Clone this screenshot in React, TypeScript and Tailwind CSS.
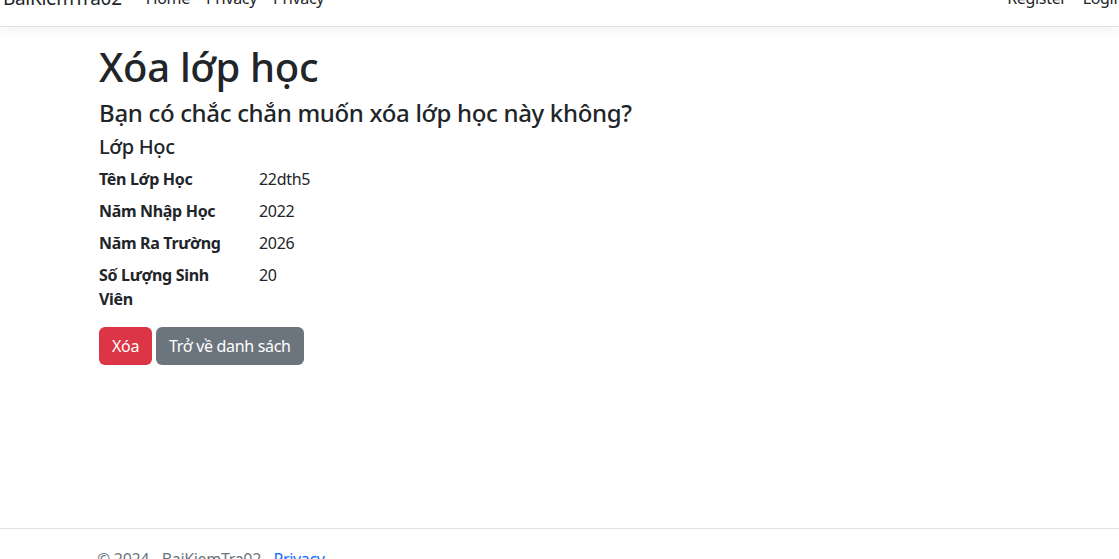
const rows = [
  { label: "Tên Lớp Học", value: "22dth5" },
  { label: "Năm Nhập Học", value: "2022" },
  { label: "Năm Ra Trường", value: "2026" },
  { label: "Số Lượng Sinh Viên", value: "20" },
];

export default function App() {
  return (
    <div
      className="flex h-[559px] flex-col overflow-hidden bg-white tracking-[-0.02em] text-[#212529]"
      style={{ fontFamily: '"Noto Sans", "Open Sans", sans-serif' }}
    >
      <header className="-mt-[30px] shrink-0">
        <nav className="flex h-[57px] items-center justify-between border-b border-[#dee2e6] bg-white py-2 shadow-[0_4px_12px_rgba(0,0,0,0.05)]">
          <div className="flex items-center">
            <a className="ml-[3px] mr-4 text-[19px] leading-[30px]">BaiKiemTra02</a>
            <ul className="flex text-[16px] leading-6">
              <li className="px-2 py-2">Home</li>
              <li className="px-2 py-2">Privacy</li>
              <li className="px-2 py-2">Privacy</li>
            </ul>
          </div>
          <ul className="-mr-[12px] flex text-[16px] leading-6">
            <li className="px-2 py-2">Register</li>
            <li className="px-2 py-2">Login</li>
          </ul>
        </nav>
      </header>

      <main className="ml-[87px] mt-4 w-[960px] shrink-0 px-3">
        <h1 className="mb-2 text-[40px] font-medium leading-[48px]">Xóa lớp học</h1>
        <h4 className="mb-2 text-[24px] font-medium leading-[28px]">
          Bạn có chắc chắn muốn xóa lớp học này không?
        </h4>
        <h5 className="mb-2 text-[20px] font-medium leading-6">Lớp Học</h5>
        <dl className="mb-4 text-[16px] leading-6">
          {rows.map((r) => (
            <div key={r.label} className="flex">
              <dt className="w-[160px] shrink-0 pr-6 font-bold">{r.label}</dt>
              <dd className="mb-2">{r.value}</dd>
            </div>
          ))}
        </dl>
        <form className="flex gap-1">
          <button
            type="button"
            className="h-[38px] rounded-md bg-[#dc3545] px-[13px] text-[16px] leading-6 text-white"
          >
            Xóa
          </button>
          <button
            type="button"
            className="h-[38px] rounded-md bg-[#6c757d] px-[13px] text-[16px] leading-6 text-white"
          >
            Trở về danh sách
          </button>
        </form>
      </main>

      <footer className="mb-[-30px] mt-auto h-[61px] shrink-0 border-t border-[#dee2e6] text-[16px] leading-[60px] text-[#6c757d]">
        <div className="ml-[85px] w-[960px] px-3">
          &copy; 2024 - BaiKiemTra02 - <a className="text-[#0d6efd]">Privacy</a>
        </div>
      </footer>
    </div>
  );
}
